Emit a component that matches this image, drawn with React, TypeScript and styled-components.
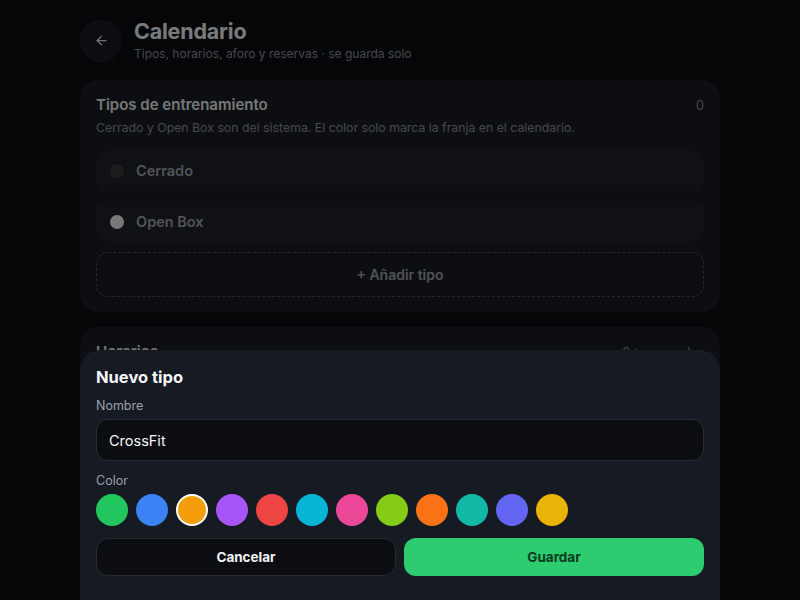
import React from "react"
import styled, { createGlobalStyle } from "styled-components"
import { ArrowLeft } from "lucide-react"

const GlobalStyle = createGlobalStyle`
  html, body {
    margin: 0;
    padding: 0;
    background: #0b0d11;
    font-family: Inter, "Noto Sans", sans-serif;
    -webkit-font-smoothing: antialiased;
  }
`

const swatches = [
  "#22c55e",
  "#3b82f6",
  "#f59e0b",
  "#a855f7",
  "#ef4444",
  "#06b6d4",
  "#ec4899",
  "#84cc16",
  "#f97316",
  "#14b8a6",
  "#6366f1",
  "#eab308",
]

const systemTypes = [
  { name: "Cerrado", dot: "#3a3b3d" },
  { name: "Open Box", dot: "#f0f0f0" },
]

export default function App() {
  const [name, setName] = React.useState("CrossFit")
  const [picked, setPicked] = React.useState("#f59e0b")

  return (
    <>
      <GlobalStyle />
      <Page>
        <Header>
          <BackButton aria-label="Volver">
            <ArrowLeft size={15} strokeWidth={2} />
          </BackButton>
          <div>
            <Title>Calendario</Title>
            <Subtitle>Tipos, horarios, aforo y reservas · se guarda solo</Subtitle>
          </div>
        </Header>

        <Card>
          <CardHead>
            <CardTitle>Tipos de entrenamiento</CardTitle>
            <CardMeta>0</CardMeta>
          </CardHead>
          <CardText>Cerrado y Open Box son del sistema. El color solo marca la franja en el calendario.</CardText>
          <TypeList>
            {systemTypes.map(t => (
              <TypeRow key={t.name}>
                <Dot $color={t.dot} />
                <TypeName>{t.name}</TypeName>
              </TypeRow>
            ))}
            <AddButton>+ Añadir tipo</AddButton>
          </TypeList>
        </Card>

        <Card>
          <CardHead>
            <CardTitle>Horarios</CardTitle>
            <CardMeta>0 temporadas</CardMeta>
          </CardHead>
          <CardText>Define las franjas semanales de cada temporada.</CardText>
        </Card>
      </Page>

      <Backdrop />

      <Sheet>
        <SheetTitle>Nuevo tipo</SheetTitle>
        <Label>Nombre</Label>
        <Input value={name} onChange={e => setName(e.target.value)} />
        <Label $gap={12}>Color</Label>
        <Swatches>
          {swatches.map(c => (
            <Swatch key={c} $color={c} $active={c === picked} onClick={() => setPicked(c)} />
          ))}
        </Swatches>
        <Actions>
          <GhostButton>Cancelar</GhostButton>
          <PrimaryButton>Guardar</PrimaryButton>
        </Actions>
      </Sheet>
    </>
  )
}

const Page = styled.div`
  width: 640px;
  margin: 0 auto;
  padding: 19px 0 40px;
  display: flex;
  flex-direction: column;
  gap: 15px;
`

const Header = styled.header`
  display: flex;
  align-items: center;
  gap: 12px;
  margin-bottom: 3px;
`

const BackButton = styled.button`
  width: 42px;
  height: 42px;
  border-radius: 50%;
  border: 1px solid #1d2027;
  background: #181b21;
  color: #e5e7eb;
  display: flex;
  align-items: center;
  justify-content: center;
  padding: 0;
`

const Title = styled.h1`
  margin: 0;
  font-size: 21.5px;
  line-height: 24px;
  font-weight: 700;
  color: #f3f4f6;
  letter-spacing: -0.2px;
`

const Subtitle = styled.p`
  margin: 3px 0 0;
  font-size: 12px;
  line-height: 16px;
  color: #8c919b;
`

const Card = styled.section`
  background: #1a1d23;
  border-radius: 18px;
  padding: 16px 16px 15px;
`

const CardHead = styled.div`
  display: flex;
  justify-content: space-between;
  align-items: center;
`

const CardTitle = styled.h2`
  margin: 0;
  font-size: 15px;
  line-height: 18px;
  font-weight: 600;
  color: #eceef1;
`

const CardMeta = styled.span`
  font-size: 12.5px;
  color: #8c919b;
`

const CardText = styled.p`
  margin: 6px 0 0;
  font-size: 12.3px;
  line-height: 16px;
  color: #8c919b;
`

const TypeList = styled.div`
  margin-top: 14px;
  display: flex;
  flex-direction: column;
  gap: 10px;
`

const TypeRow = styled.div`
  height: 41px;
  border-radius: 12px;
  background: #202329;
  display: flex;
  align-items: center;
  gap: 12px;
  padding: 0 14px;
`

const Dot = styled.span<{ $color: string }>`
  width: 14px;
  height: 14px;
  border-radius: 50%;
  background: ${p => p.$color};
`

const TypeName = styled.span`
  font-size: 14.5px;
  font-weight: 600;
  color: #a4a8b0;
`

const AddButton = styled.button`
  height: 45px;
  border-radius: 12px;
  border: 1px dashed #4a4e57;
  background: transparent;
  color: #9ea2aa;
  font-family: inherit;
  font-size: 14px;
  font-weight: 600;
`

const Backdrop = styled.div`
  position: fixed;
  inset: 0;
  background: rgba(0, 0, 0, 0.5);
`

const Sheet = styled.div`
  position: fixed;
  left: 50%;
  bottom: 0;
  width: 640px;
  transform: translateX(-50%);
  box-sizing: border-box;
  background: #161a22;
  border-radius: 20px 20px 0 0;
  padding: 16px 16px 24px;
  display: flex;
  flex-direction: column;
`

const SheetTitle = styled.h3`
  margin: 0;
  font-size: 16.5px;
  line-height: 22px;
  font-weight: 700;
  color: #f5f6f8;
`

const Label = styled.label<{ $gap?: number }>`
  margin-top: ${p => p.$gap ?? 10}px;
  margin-bottom: 5px;
  font-size: 12.5px;
  line-height: 16px;
  color: #9aa0aa;
`

const Input = styled.input`
  height: 42px;
  box-sizing: border-box;
  border-radius: 12px;
  border: 1px solid #272b34;
  background: #0b0d11;
  color: #f3f4f6;
  font-family: inherit;
  font-size: 14.5px;
  padding: 0 12px;
  outline: none;
`

const Swatches = styled.div`
  display: flex;
  gap: 8px;
`

const Swatch = styled.button<{ $color: string; $active?: boolean }>`
  width: 32px;
  height: 32px;
  border-radius: 50%;
  padding: 0;
  background: ${p => p.$color};
  border: ${p => (p.$active ? "2px solid #ffffff" : "none")};
  box-sizing: border-box;
`

const Actions = styled.div`
  margin-top: 12px;
  display: grid;
  grid-template-columns: 1fr 1fr;
  gap: 8px;
`

const BaseButton = styled.button`
  height: 38px;
  border-radius: 12px;
  font-family: inherit;
  font-size: 13.5px;
  font-weight: 700;
`

const GhostButton = styled(BaseButton)`
  background: #0b0d11;
  border: 1px solid #272b34;
  color: #f3f4f6;
`

const PrimaryButton = styled(BaseButton)`
  background: #2ecc71;
  border: none;
  color: #0a3a1d;
`
